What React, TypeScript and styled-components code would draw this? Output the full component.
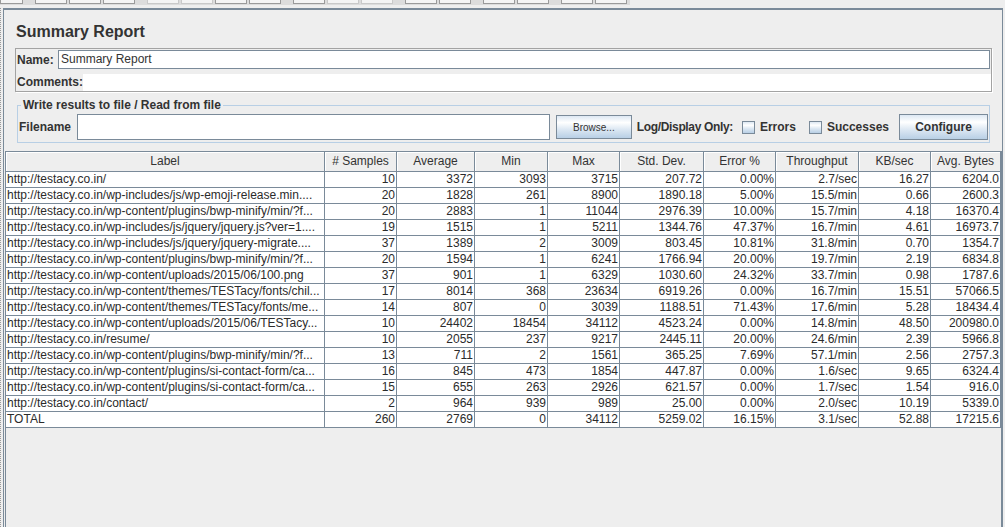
import React from 'react';
import styled, { createGlobalStyle } from 'styled-components';

const GlobalStyles = createGlobalStyle`
  html, body {
    margin: 0;
    padding: 0;
    background: #eeeeee;
    font-family: "Liberation Sans", Arial, sans-serif;
    color: #333333;
  }
  * { box-sizing: border-box; }
`;

const LINE = '#7a8a99';
const BUTTON_BG = 'linear-gradient(to bottom, #dde8f3 0%, #ffffff 30%, #dde8f3 60%, #b8cfe5 100%)';

const Screen = styled.div`
  width: 1005px;
  height: 527px;
  overflow: hidden;
  display: flex;
  flex-direction: column;
`;

const ToolBar = styled.div`
  display: flex;
  width: 630px;
  height: 5px;
  margin-bottom: 3px;
  background: #dcdcdc;
`;

const ToolGroup = styled.div`
  display: flex;
  gap: 2px;
  margin-right: 12px;
`;

const ToolButton = styled.div<{ $w?: number; $off?: boolean }>`
  width: ${p => p.$w ?? 32}px;
  height: 4px;
  background: #f4f4f4;
  border: 1px solid ${p => (p.$off ? '#c9c9c9' : '#9a9a9a')};
  border-top: none;
`;

const Body = styled.div`
  flex: 1;
  display: flex;
  min-height: 0;
`;

const Splitter = styled.div`
  width: 3px;
  border-left: 1px dotted #9a9a9a;
`;

const Panel = styled.div`
  width: 1000px;
  display: flex;
  flex-direction: column;
  border-top: 2px solid ${LINE};
  border-left: 1px solid ${LINE};
  border-right: 1px solid ${LINE};
`;

const Title = styled.h1`
  margin: 12px 0 7px 12px;
  font-size: 16px;
  line-height: 19px;
  font-weight: bold;
  color: #333;
`;

const Section = styled.div`
  margin: 0 10px 0 11px;
  display: flex;
  flex-direction: column;
`;

const NameBox = styled.div`
  height: 44px;
  border: 1px solid #a3a3a3;
  box-shadow: 1px 1px 0 #ffffff;
  padding: 1px 1px 0 0;
  display: flex;
  flex-direction: column;
  overflow: hidden;
`;

const FieldRow = styled.div`
  display: flex;
  align-items: center;
`;

const Label = styled.span<{ $gap?: number; $tight?: boolean }>`
  font-size: 12px;
  font-weight: bold;
  white-space: nowrap;
  color: #333;
  margin-right: ${p => p.$gap ?? 0}px;
  letter-spacing: ${p => (p.$tight ? '-0.35px' : 'normal')};
`;

const NameLabel = styled(Label)`
  width: 42px;
  padding-left: 1px;
`;

const TextField = styled.div<{ $h: number }>`
  flex: 1;
  height: ${p => p.$h}px;
  background: #ffffff;
  border: 1px solid ${LINE};
  font-size: 12px;
  line-height: ${p => p.$h - 2}px;
  padding-left: 2px;
  color: #333;
`;

const CommentsRow = styled.div`
  display: flex;
  margin-top: 5px;
  flex: 1;
`;

const CommentsArea = styled.div`
  flex: 1;
  background: #ffffff;
  margin-right: -1px;
`;

const CommentsLabel = styled(Label)`
  padding-left: 1px;
  line-height: 16px;
`;

const Group = styled.fieldset`
  margin: 6px 2px 0 2px;
  padding: 0 1px 2px 1px;
  border: 1px solid #b8cfe5;
  min-width: 0;
`;

const Legend = styled.legend`
  margin-left: 2px;
  padding: 0 2px;
  font-size: 12px;
  line-height: 14px;
  font-weight: bold;
  color: #333;
`;

const FileRow = styled.div`
  display: flex;
  align-items: center;
  height: 26px;
  margin-top: 2px;
`;

const Spacer = styled.div<{ $w: number }>`
  width: ${p => p.$w}px;
  flex-shrink: 0;
`;

const Button = styled.div<{ $w: number; $small?: boolean }>`
  width: ${p => p.$w}px;
  height: ${p => (p.$small ? 24 : 26)}px;
  border: 1px solid ${LINE};
  background: ${BUTTON_BG};
  display: flex;
  align-items: center;
  justify-content: center;
  font-size: ${p => (p.$small ? 10 : 12)}px;
  font-weight: ${p => (p.$small ? 'normal' : 'bold')};
  color: #333;
  flex-shrink: 0;
`;

const CheckBox = styled.div`
  width: 13px;
  height: 13px;
  border: 1px solid ${LINE};
  background: ${BUTTON_BG};
  margin-right: 5px;
  flex-shrink: 0;
`;

const ScrollPane = styled.div`
  flex: 1;
  margin: 8px 0 0 1px;
  width: 997px;
  border: 1px solid ${LINE};
  border-bottom: none;
  background: #eeeeee;
`;

const COLS = [319, 72, 78, 73, 72, 84, 72, 83, 72, 70];

const Grid = styled.div`
  display: grid;
  grid-template-columns: ${COLS.map(c => `${c}px`).join(' ')};
`;

const HeadCell = styled.div`
  height: 20px;
  line-height: 19px;
  font-size: 12px;
  text-align: center;
  background: #eeeeee;
  border-right: 1px solid ${LINE};
  border-bottom: 1px solid ${LINE};
  box-shadow: inset 1px 1px 0 #ffffff;
  white-space: nowrap;
  overflow: hidden;
  color: #333;
`;

const Cell = styled.div<{ $left?: boolean }>`
  height: 16px;
  line-height: 15px;
  font-size: 12px;
  background: #ffffff;
  border-right: 1px solid ${LINE};
  border-bottom: 1px solid ${LINE};
  text-align: ${p => (p.$left ? 'left' : 'right')};
  padding: ${p => (p.$left ? '0 0 0 1px' : '0 1px 0 0')};
  white-space: nowrap;
  overflow: hidden;
  color: #2b2b2b;
`;

const headers = ['Label', '# Samples', 'Average', 'Min', 'Max', 'Std. Dev.', 'Error %', 'Throughput', 'KB/sec', 'Avg. Bytes'];

const rows: string[][] = [
  ['http://testacy.co.in/', '10', '3372', '3093', '3715', '207.72', '0.00%', '2.7/sec', '16.27', '6204.0'],
  ['http://testacy.co.in/wp-includes/js/wp-emoji-release.min....', '20', '1828', '261', '8900', '1890.18', '5.00%', '15.5/min', '0.66', '2600.3'],
  ['http://testacy.co.in/wp-content/plugins/bwp-minify/min/?f...', '20', '2883', '1', '11044', '2976.39', '10.00%', '15.7/min', '4.18', '16370.4'],
  ['http://testacy.co.in/wp-includes/js/jquery/jquery.js?ver=1....', '19', '1515', '1', '5211', '1344.76', '47.37%', '16.7/min', '4.61', '16973.7'],
  ['http://testacy.co.in/wp-includes/js/jquery/jquery-migrate....', '37', '1389', '2', '3009', '803.45', '10.81%', '31.8/min', '0.70', '1354.7'],
  ['http://testacy.co.in/wp-content/plugins/bwp-minify/min/?f...', '20', '1594', '1', '6241', '1766.94', '20.00%', '19.7/min', '2.19', '6834.8'],
  ['http://testacy.co.in/wp-content/uploads/2015/06/100.png', '37', '901', '1', '6329', '1030.60', '24.32%', '33.7/min', '0.98', '1787.6'],
  ['http://testacy.co.in/wp-content/themes/TESTacy/fonts/chil...', '17', '8014', '368', '23634', '6919.26', '0.00%', '16.7/min', '15.51', '57066.5'],
  ['http://testacy.co.in/wp-content/themes/TESTacy/fonts/me...', '14', '807', '0', '3039', '1188.51', '71.43%', '17.6/min', '5.28', '18434.4'],
  ['http://testacy.co.in/wp-content/uploads/2015/06/TESTacy...', '10', '24402', '18454', '34112', '4523.24', '0.00%', '14.8/min', '48.50', '200980.0'],
  ['http://testacy.co.in/resume/', '10', '2055', '237', '9217', '2445.11', '20.00%', '24.6/min', '2.39', '5966.8'],
  ['http://testacy.co.in/wp-content/plugins/bwp-minify/min/?f...', '13', '711', '2', '1561', '365.25', '7.69%', '57.1/min', '2.56', '2757.3'],
  ['http://testacy.co.in/wp-content/plugins/si-contact-form/ca...', '16', '845', '473', '1854', '447.87', '0.00%', '1.6/sec', '9.65', '6324.4'],
  ['http://testacy.co.in/wp-content/plugins/si-contact-form/ca...', '15', '655', '263', '2926', '621.57', '0.00%', '1.7/sec', '1.54', '916.0'],
  ['http://testacy.co.in/contact/', '2', '964', '939', '989', '25.00', '0.00%', '2.0/sec', '10.19', '5339.0'],
  ['TOTAL', '260', '2769', '0', '34112', '5259.02', '16.15%', '3.1/sec', '52.88', '17215.6'],
];

// toolbar groups: widths of buttons and which ones are greyed out
const toolGroups: { w?: number; off?: boolean }[][] = [
  [{ w: 23 }],
  [{}, {}, {}],
  [{ off: true }, { off: true }, {}, {}],
  [{}, { off: true }, { off: true }],
  [{}, {}],
  [{}, {}],
  [{}, {}],
];

export default function App() {
  return (
    <Screen>
      <GlobalStyles />
      <ToolBar>
        {toolGroups.map((g, i) => (
          <ToolGroup key={i}>
            {g.map((b, j) => (
              <ToolButton key={j} $w={b.w} $off={b.off} />
            ))}
          </ToolGroup>
        ))}
      </ToolBar>

      <Body>
        <Splitter />
        <Panel>
          <Title>Summary Report</Title>

          <Section>
            <NameBox>
              <FieldRow>
                <NameLabel>Name:</NameLabel>
                <TextField $h={19}>Summary Report</TextField>
              </FieldRow>
              <CommentsRow>
                <CommentsLabel>Comments:</CommentsLabel>
                <CommentsArea />
              </CommentsRow>
            </NameBox>

            <Group>
              <Legend>Write results to file / Read from file</Legend>
              <FileRow>
                <Label $gap={6}>Filename</Label>
                <TextField $h={26} />
                <Spacer $w={6} />
                <Button $w={76} $small>Browse...</Button>
                <Spacer $w={5} />
                <Label $gap={9} $tight>Log/Display Only:</Label>
                <CheckBox />
                <Label $gap={13}>Errors</Label>
                <CheckBox />
                <Label $gap={10}>Successes</Label>
                <Button $w={89}>Configure</Button>
              </FileRow>
            </Group>
          </Section>

          <ScrollPane>
            <Grid>
              {headers.map(h => (
                <HeadCell key={h}>{h}</HeadCell>
              ))}
              {rows.map((r, i) =>
                r.map((v, j) => (
                  <Cell key={`${i}-${j}`} $left={j === 0}>
                    {v}
                  </Cell>
                ))
              )}
            </Grid>
          </ScrollPane>
        </Panel>
      </Body>
    </Screen>
  );
}
